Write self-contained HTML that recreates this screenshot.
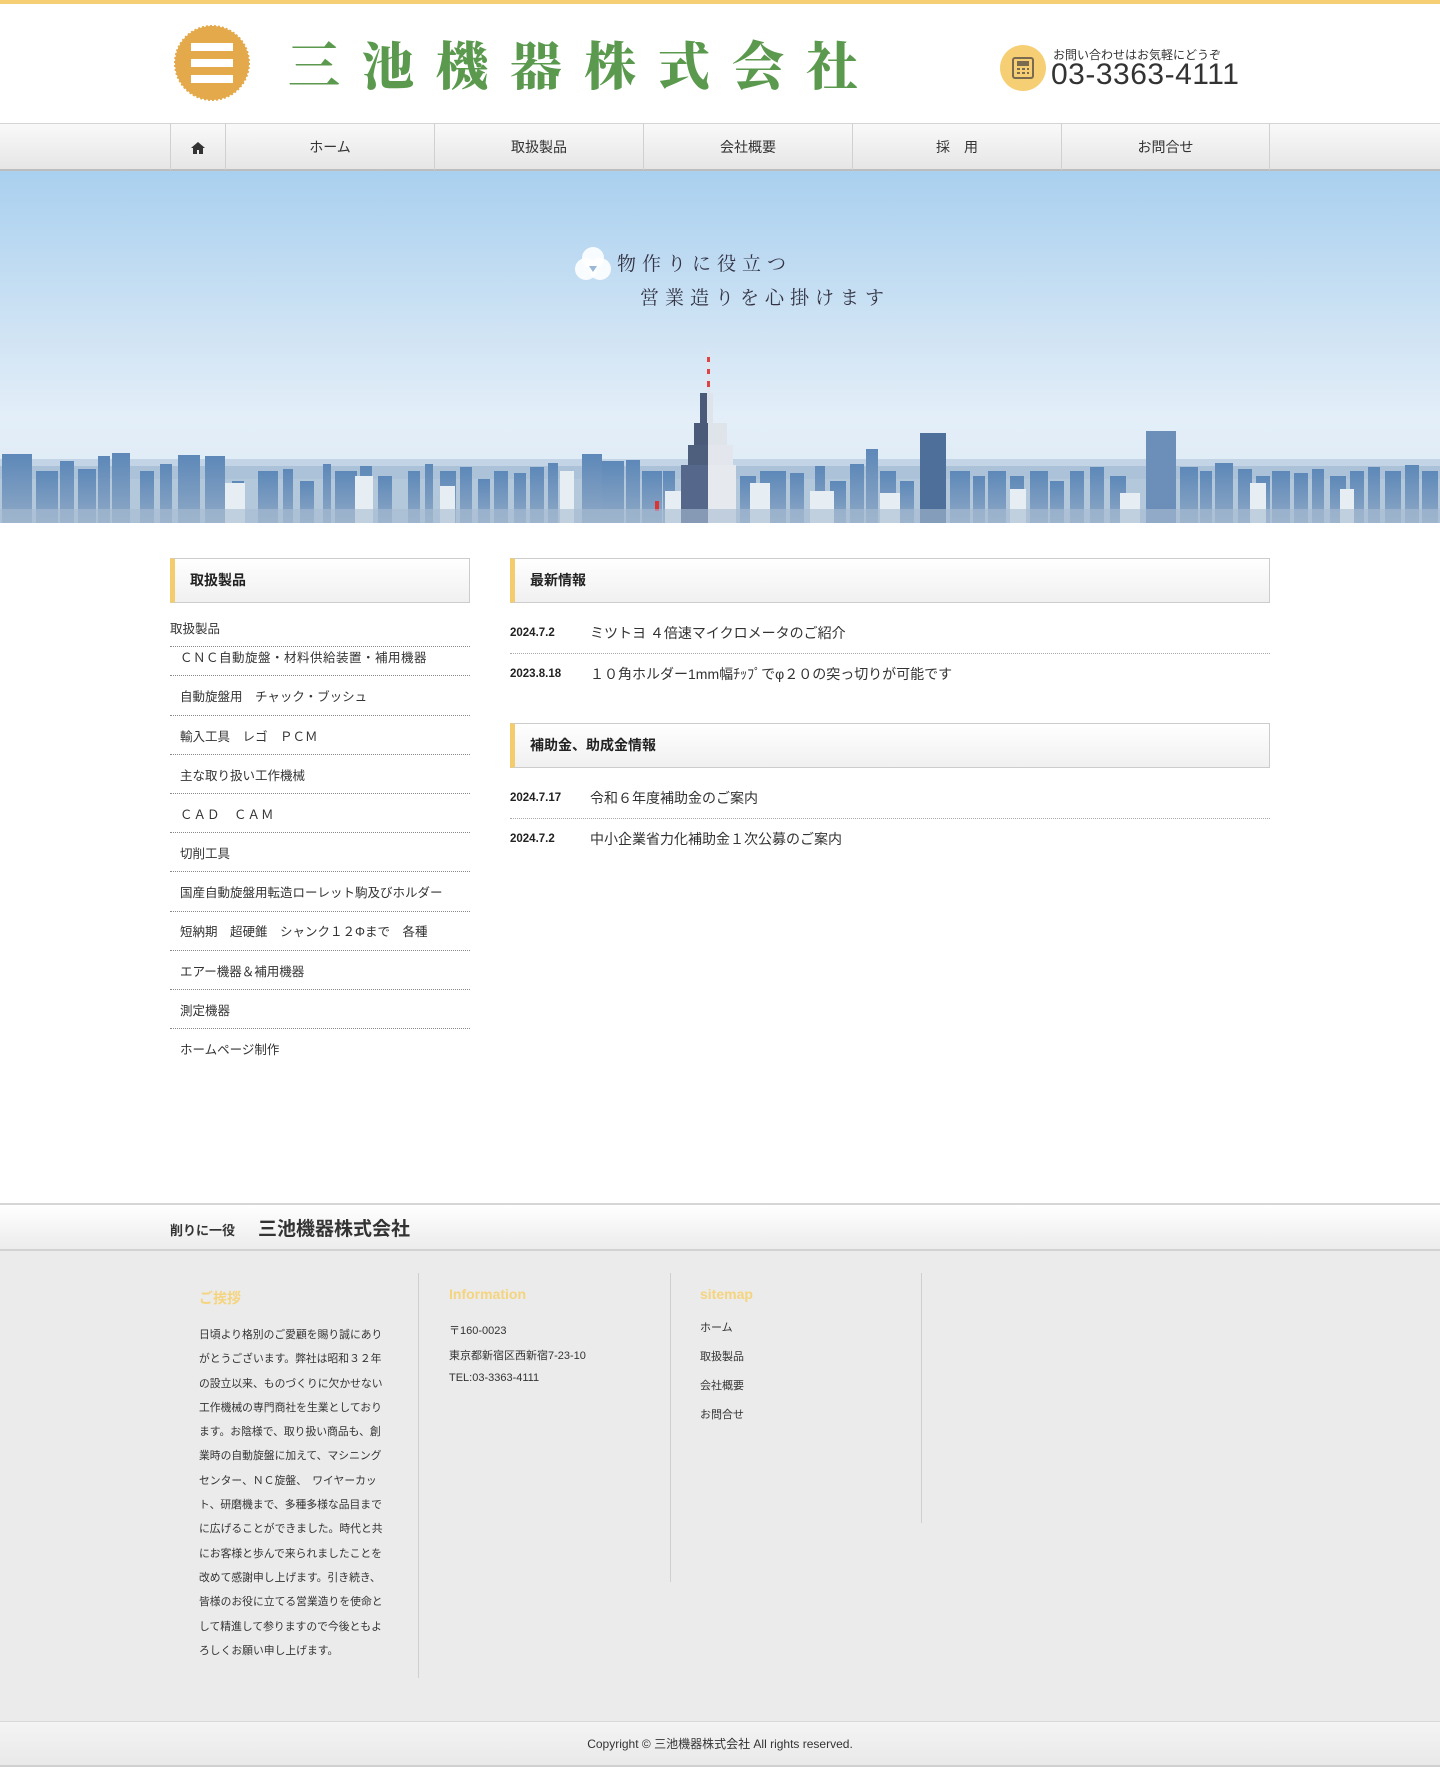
<!DOCTYPE html>
<html lang="ja"><head><meta charset="utf-8">
<style>
*{margin:0;padding:0;box-sizing:border-box}
body{width:1440px;height:1781px;background:#fff;font-family:"Liberation Sans","Noto Sans CJK JP",sans-serif;color:#333;position:relative;overflow:hidden}
.abs{position:absolute}
#top{top:0;left:0;width:1440px;height:4px;background:#f6cf75}
#title{left:288px;top:28px;font-family:"Noto Serif CJK SC","Noto Sans CJK JP",serif;font-weight:900;font-size:52px;letter-spacing:22px;color:#5b9a4e;white-space:nowrap;line-height:70px}
#nav{top:123px;left:0;width:1440px;height:48px;background:linear-gradient(#f9f9f9,#e6e6e6);border-top:1px solid #d4d4d4;border-bottom:2px solid #bdbdbd}
#nav div{position:absolute;top:0;height:46px;border-left:1px solid #d0d0d0;font-size:14px;line-height:46px;text-align:center;color:#333}
#hero{top:171px;left:0;width:1440px;height:352px;background:linear-gradient(#a9d0ef 0%,#cfe3f4 45%,#e3eef8 70%,#dce9f3 100%)}
.tag{font-family:"Noto Serif CJK SC",serif;font-size:19px;letter-spacing:6px;color:#334}
.hd{position:absolute;height:45px;border:1px solid #ccc;border-left:5px solid #f3cc6e;background:linear-gradient(#fff,#f0f0f0);font-weight:bold;font-size:14px;line-height:43px;padding-left:15px;color:#222}
.sl{position:absolute;left:170px;width:300px;border-bottom:1px dotted #888}
.si{position:absolute;left:180px;font-size:12.5px;color:#333;white-space:nowrap}
.nl{position:absolute;left:510px;width:760px;border-bottom:1px dotted #aaa}
.nd{position:absolute;left:510px;font-size:11.5px;font-weight:bold;color:#222}
.nt{position:absolute;left:590px;font-size:14px;color:#333;white-space:nowrap}
#fband{top:1203px;left:0;width:1440px;height:48px;background:linear-gradient(#fff,#ececec);border-top:2px solid #d6d6d6;border-bottom:2px solid #d2d2d2}
#fgray{top:1251px;left:0;width:1440px;height:470px;background:#ebebeb}
#copy{top:1721px;left:0;width:1440px;height:46px;background:linear-gradient(#f4f4f4,#e9e9e9);border-top:1px solid #d8d8d8;border-bottom:2px solid #d0d0d0;text-align:center;font-size:12px;line-height:44px;color:#333}
.fh{position:absolute;top:1288px;color:#f5d47e;font-weight:bold;font-size:14px}
.vl{position:absolute;width:1px;background:#cfcfcf}
.ft{position:absolute;font-size:11px;color:#333;white-space:nowrap}
</style></head><body>
<div id="top" class="abs"></div>
<svg class="abs" style="left:174px;top:25px" width="76" height="76" viewBox="0 0 76 76">
<circle cx="38" cy="38" r="37" fill="#e3a94a" stroke="#e3a94a" stroke-width="2" stroke-dasharray="2 2"/>
<circle cx="38" cy="38" r="33" fill="#e3a94a"/>
<rect x="17" y="18" width="42" height="8" fill="#fff"/><rect x="17" y="34" width="42" height="8" fill="#fff"/><rect x="17" y="50" width="42" height="8" fill="#fff"/>
</svg>
<div id="title" class="abs">三池機器株式会社</div>
<svg class="abs" style="left:1000px;top:45px" width="46" height="46"><circle cx="23" cy="23" r="23" fill="#f6cf75"/><rect x="13" y="13" width="20" height="20" rx="2" fill="none" stroke="#7a6a50" stroke-width="2"/><rect x="17" y="16" width="12" height="5" fill="#7a6a50"/><path d="M17 24h3M22 24h3M27 24h2M17 28h3M22 28h3M27 28h2" stroke="#7a6a50" stroke-width="2"/></svg>
<div class="abs" style="left:1053px;top:46px;font-size:12px;color:#333">お問い合わせはお気軽にどうぞ</div>
<div class="abs" style="left:1051px;top:58px;font-size:30px;color:#333;letter-spacing:0.5px">03-3363-4111</div>
<div id="nav" class="abs">
<div style="left:170px;width:55px"><svg width="16" height="14" viewBox="0 0 16 14" style="vertical-align:middle"><path d="M8 1L1 7h2v6h4V9h2v4h4V7h2z" fill="#333"/></svg></div>
<div style="left:225px;width:209px">ホーム</div>
<div style="left:434px;width:209px">取扱製品</div>
<div style="left:643px;width:209px">会社概要</div>
<div style="left:852px;width:209px">採　用</div>
<div style="left:1061px;width:209px;border-right:1px solid #d0d0d0">お問合せ</div>
</div>
<div id="hero" class="abs">
<svg width="1440" height="352" style="position:absolute;left:0;top:0">
<defs><linearGradient id="b" x1="0" y1="0" x2="0" y2="1"><stop offset="0" stop-color="#5d88b8"/><stop offset="1" stop-color="#8fa9c6"/></linearGradient></defs>
<rect x="0" y="295" width="1440" height="57" fill="#b4c8dc"/>
<g fill="#a4bbd3">
<rect x="0" y="288" width="1440" height="20" opacity=".5"/>
</g>
<g fill="url(#b)">
<rect x="2" y="283" width="30" height="69"/><rect x="36" y="300" width="22" height="52"/><rect x="60" y="290" width="14" height="62"/><rect x="78" y="298" width="18" height="54"/><rect x="98" y="285" width="12" height="67"/><rect x="112" y="282" width="18" height="70"/><rect x="140" y="300" width="14" height="52"/><rect x="160" y="293" width="12" height="59"/><rect x="178" y="284" width="22" height="68"/><rect x="205" y="285" width="20" height="67"/><rect x="232" y="310" width="12" height="42"/><rect x="258" y="300" width="20" height="52"/><rect x="283" y="298" width="10" height="54"/><rect x="300" y="310" width="14" height="42"/><rect x="323" y="293" width="8" height="59"/><rect x="335" y="300" width="22" height="52"/><rect x="360" y="295" width="12" height="57"/><rect x="378" y="305" width="14" height="47"/><rect x="408" y="300" width="12" height="52"/><rect x="425" y="293" width="8" height="59"/><rect x="440" y="300" width="16" height="52"/><rect x="460" y="296" width="12" height="56"/><rect x="478" y="308" width="12" height="44"/><rect x="494" y="300" width="14" height="52"/><rect x="514" y="302" width="12" height="50"/><rect x="530" y="296" width="14" height="56"/><rect x="548" y="292" width="10" height="60"/><rect x="582" y="283" width="20" height="69"/><rect x="602" y="290" width="22" height="62"/><rect x="626" y="289" width="14" height="63"/><rect x="642" y="300" width="20" height="52"/><rect x="663" y="300" width="12" height="52"/><rect x="740" y="305" width="16" height="47"/><rect x="760" y="300" width="26" height="52"/><rect x="790" y="302" width="14" height="50"/><rect x="815" y="295" width="10" height="57"/><rect x="830" y="310" width="16" height="42"/><rect x="850" y="293" width="14" height="59"/><rect x="866" y="278" width="12" height="74"/><rect x="880" y="300" width="16" height="52"/><rect x="900" y="310" width="14" height="42"/><rect x="920" y="262" width="26" height="90" fill="#4d6f9a"/><rect x="950" y="300" width="20" height="52"/><rect x="973" y="305" width="12" height="47"/><rect x="988" y="300" width="18" height="52"/><rect x="1010" y="305" width="14" height="47"/><rect x="1030" y="300" width="18" height="52"/><rect x="1050" y="310" width="14" height="42"/><rect x="1070" y="300" width="14" height="52"/><rect x="1090" y="296" width="14" height="56"/><rect x="1110" y="305" width="16" height="47"/><rect x="1146" y="260" width="30" height="92" fill="#6b8fb8"/><rect x="1180" y="296" width="18" height="56"/><rect x="1200" y="300" width="12" height="52"/><rect x="1215" y="292" width="18" height="60"/><rect x="1238" y="298" width="14" height="54"/><rect x="1256" y="305" width="14" height="47"/><rect x="1272" y="300" width="18" height="52"/><rect x="1294" y="302" width="14" height="50"/><rect x="1312" y="298" width="12" height="54"/><rect x="1330" y="305" width="16" height="47"/><rect x="1350" y="300" width="14" height="52"/><rect x="1368" y="296" width="12" height="56"/><rect x="1385" y="300" width="16" height="52"/><rect x="1405" y="294" width="14" height="58"/><rect x="1422" y="300" width="16" height="52"/>
</g>
<g fill="#e6edf3">
<rect x="225" y="312" width="20" height="40"/><rect x="355" y="305" width="18" height="47"/><rect x="440" y="315" width="15" height="37"/><rect x="560" y="300" width="14" height="52"/><rect x="665" y="320" width="18" height="32"/><rect x="750" y="312" width="20" height="40"/><rect x="810" y="320" width="24" height="32"/><rect x="880" y="322" width="20" height="30"/><rect x="1010" y="318" width="16" height="34"/><rect x="1120" y="322" width="20" height="30"/><rect x="1250" y="312" width="16" height="40"/><rect x="1340" y="318" width="14" height="34"/>
</g>
<!-- tower -->
<rect x="707" y="179" width="3" height="50" fill="#e2e6ec"/>
<rect x="707" y="186" width="3" height="5" fill="#d44"/><rect x="707" y="198" width="3" height="5" fill="#d44"/><rect x="707" y="210" width="3" height="6" fill="#d44"/>
<rect x="700" y="222" width="7" height="131" fill="#4a5a78"/><rect x="707" y="222" width="6" height="131" fill="#dfe3ea"/>
<rect x="694" y="252" width="14" height="100" fill="#4a5a78"/><rect x="708" y="252" width="19" height="100" fill="#dfe3ea"/>
<rect x="688" y="274" width="20" height="78" fill="#4e5f7e"/><rect x="708" y="274" width="25" height="78" fill="#e3e6ec"/>
<rect x="681" y="294" width="27" height="58" fill="#55678a"/><rect x="708" y="294" width="28" height="58" fill="#e6e9ee"/>
<rect x="655" y="330" width="4" height="10" fill="#d33"/>
<rect x="0" y="338" width="1440" height="14" fill="#a8bdd2" opacity="0.6"/>
</svg>
<svg class="abs" style="left:573px;top:73px" width="40" height="40"><circle cx="20" cy="14" r="11" fill="#fff" opacity=".9"/><circle cx="13" cy="25" r="11" fill="#fff" opacity=".9"/><circle cx="27" cy="25" r="11" fill="#fff" opacity=".9"/><path d="M16 22l4 6 4-6z" fill="#9ab8d8"/></svg>
<div class="abs tag" style="left:617px;top:78px">物作りに役立つ</div>
<div class="abs tag" style="left:640px;top:112px">営業造りを心掛けます</div>
</div>

<div class="hd" style="left:170px;top:558px;width:300px">取扱製品</div>
<div class="abs" style="left:170px;top:618px;font-size:12.5px">取扱製品</div>
<div class="sl" style="top:646px"></div>
<div class="si" style="top:647px;letter-spacing:0.5px">ＣＮＣ自動旋盤・材料供給装置・補用機器</div>
<div class="sl" style="top:675px"></div>
<div class="si" style="top:686px">自動旋盤用　チャック・ブッシュ</div>
<div class="sl" style="top:715px"></div>
<div class="si" style="top:726px">輸入工具　レゴ　ＰＣＭ</div>
<div class="sl" style="top:754px"></div>
<div class="si" style="top:765px">主な取り扱い工作機械</div>
<div class="sl" style="top:793px"></div>
<div class="si" style="top:804px;letter-spacing:1px">ＣＡＤ　ＣＡＭ</div>
<div class="sl" style="top:832px"></div>
<div class="si" style="top:843px">切削工具</div>
<div class="sl" style="top:871px"></div>
<div class="si" style="top:882px">国産自動旋盤用転造ローレット駒及びホルダー</div>
<div class="sl" style="top:911px"></div>
<div class="si" style="top:921px">短納期　超硬錐　シャンク１２Φまで　各種</div>
<div class="sl" style="top:950px"></div>
<div class="si" style="top:961px">エアー機器＆補用機器</div>
<div class="sl" style="top:989px"></div>
<div class="si" style="top:1000px">測定機器</div>
<div class="sl" style="top:1028px"></div>
<div class="si" style="top:1039px">ホームページ制作</div>

<div class="hd" style="left:510px;top:558px;width:760px">最新情報</div>
<div class="nd" style="top:627px">2024.7.2</div><div class="nt" style="top:623px">ミツトヨ ４倍速マイクロメータのご紹介</div>
<div class="nl" style="top:653px"></div>
<div class="nd" style="top:668px">2023.8.18</div><div class="nt" style="top:664px">１０角ホルダー1mm幅ﾁｯﾌﾟでφ２０の突っ切りが可能です</div>
<div class="hd" style="left:510px;top:723px;width:760px">補助金、助成金情報</div>
<div class="nd" style="top:792px">2024.7.17</div><div class="nt" style="top:788px">令和６年度補助金のご案内</div>
<div class="nl" style="top:818px"></div>
<div class="nd" style="top:833px">2024.7.2</div><div class="nt" style="top:829px">中小企業省力化補助金１次公募のご案内</div>

<div id="fband" class="abs"><span style="position:absolute;left:170px;top:15px;font-size:13px;font-weight:bold;color:#333">削りに一役</span><span style="position:absolute;left:258px;top:9px;font-size:19px;font-weight:bold;color:#333">三池機器株式会社</span></div>
<div id="fgray" class="abs"></div>
<div class="fh" style="left:199px">ご挨拶</div>
<div class="fh" style="left:449px;top:1286px">Information</div>
<div class="fh" style="left:700px;top:1286px">sitemap</div>
<div class="vl" style="left:418px;top:1273px;height:405px"></div>
<div class="vl" style="left:670px;top:1273px;height:309px"></div>
<div class="vl" style="left:921px;top:1273px;height:250px"></div>
<div class="ft" style="left:199px;top:1323px;line-height:24.3px;width:188px;white-space:normal;font-size:10.8px">日頃より格別のご愛顧を賜り誠にありがとうございます。弊社は昭和３２年の設立以来、ものづくりに欠かせない工作機械の専門商社を生業としております。お陰様で、取り扱い商品も、創業時の自動旋盤に加えて、マシニングセンター、ＮＣ旋盤、　ワイヤーカット、研磨機まで、多種多様な品目までに広げることができました。時代と共にお客様と歩んで来られましたことを改めて感謝申し上げます。引き続き、皆様のお役に立てる営業造りを使命として精進して参りますので今後ともよろしくお願い申し上げます。</div>
<div class="ft" style="left:449px;top:1322px">〒160-0023</div>
<div class="ft" style="left:449px;top:1347px">東京都新宿区西新宿7-23-10</div>
<div class="ft" style="left:449px;top:1372px">TEL:03-3363-4111</div>
<div class="ft" style="left:700px;top:1319px">ホーム</div>
<div class="ft" style="left:700px;top:1348px">取扱製品</div>
<div class="ft" style="left:700px;top:1377px">会社概要</div>
<div class="ft" style="left:700px;top:1406px">お問合せ</div>
<div id="copy" class="abs">Copyright ©  三池機器株式会社 All rights reserved.</div>
</body></html>
